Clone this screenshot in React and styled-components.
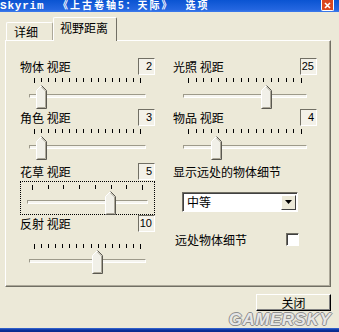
import React from "react";
import styled, { createGlobalStyle } from "styled-components";

const GlobalStyle = createGlobalStyle`
  html, body {
    margin: 0;
    padding: 0;
    background: #ece9d8;
  }
  body {
    font-family: "Noto Sans CJK SC", "Liberation Sans", sans-serif;
    font-size: 12px;
    color: #000;
  }
`;

const Window = styled.div`
  width: 339px;
  height: 332px;
  display: flex;
  flex-direction: column;
  background: #ece9d8;
  overflow: hidden;
`;

const TitleBar = styled.div`
  height: 12px;
  flex: none;
  display: flex;
  align-items: flex-start;
  justify-content: space-between;
  background: linear-gradient(#0a54d2, #2466e0 80%, #3d7cec);
  padding-right: 5px;
`;

const Title = styled.div`
  display: flex;
  align-items: center;
  height: 12px;
  color: #fff;
  font-weight: bold;
  white-space: pre;
`;

const Latin = styled.span`
  font-family: "Liberation Mono", monospace;
  font-size: 11px;
  line-height: 12px;
  letter-spacing: 0.8px;
  width: ${p => p.w}px;
`;

const Cjk = styled.span`
  display: block;
  font-family: "Liberation Sans", "Noto Sans CJK SC", sans-serif;
  font-size: 10px;
  line-height: 12px;
  height: 12px;
  letter-spacing: 2px;
  margin-right: ${p => p.mr || 0}px;
`;

const CloseBox = styled.div`
  width: 11px;
  height: 10px;
  background: #d9461e;
  border: 1px solid #fff;
  border-top: none;
  border-radius: 0 0 2px 2px;
  display: flex;
  align-items: center;
  justify-content: center;
`;

const Body = styled.div`
  flex: 1;
  display: flex;
  flex-direction: column;
  padding: 0 8px 0 5px;
`;

const TabStrip = styled.div`
  height: 28px;
  display: flex;
  align-items: flex-end;
  padding-left: 1px;
  position: relative;
  z-index: 1;
`;

const Tab = styled.div`
  height: ${p => (p.active ? 24 : 18)}px;
  margin-bottom: ${p => (p.active ? -1 : 0)}px;
  padding: ${p => (p.active ? "3px 8px 0 6px" : "2px 14px 0 7px")};
  box-sizing: border-box;
  background: #ece9d8;
  border-top: 1px solid #fff;
  border-left: 1px solid #fff;
  border-right: 1px solid ${p => (p.active ? "#716f64" : "#aca899")};
  border-radius: 2px 2px 0 0;
  line-height: 14px;
  font-size: 12px;
`;

const Panel = styled.div`
  height: 247px;
  box-sizing: border-box;
  border-top: 1px solid #fff;
  border-left: 1px solid #fff;
  border-right: 1px solid #716f64;
  border-bottom: 1px solid #716f64;
  box-shadow: inset -1px -1px 0 #aca899;
  padding: 17px 0 0 14px;
  display: grid;
  grid-template-columns: 135px 144px;
  column-gap: 18px;
  align-items: start;
`;

const Column = styled.div`
  display: flex;
  flex-direction: column;
`;

const Header = styled.div`
  height: 17px;
  display: flex;
  align-items: center;
  justify-content: space-between;
  margin-top: ${p => p.mt || 0}px;
`;

const Label = styled.span`
  font-size: 12px;
  line-height: 14px;
  white-space: pre;
`;

const ValueBox = styled.div`
  width: 17px;
  height: 17px;
  box-sizing: border-box;
  border-top: 1px solid #716f64;
  border-left: 1px solid #716f64;
  border-bottom: 1px solid #fff;
  border-right: 1px solid #fff;
  background: #f3f1e8;
  font-family: "Liberation Sans", sans-serif;
  font-size: 11px;
  line-height: 15px;
  text-align: right;
  padding-right: 2px;
`;

const SliderBox = styled.div`
  height: 34px;
  box-sizing: border-box;
  padding: ${p => p.top}px ${p => p.inset}px 0;
  margin-top: ${p => p.mt || 0}px;
  border: 1px dotted ${p => (p.focused ? "#000" : "transparent")};
`;

const TickRow = styled.div`
  height: 5px;
  margin: 0 5px;
  display: flex;
  justify-content: space-between;
`;

const Tick = styled.div`
  width: 1px;
  height: ${p => (p.edge ? 5 : 4)}px;
  background: #000;
`;

const Track = styled.div`
  position: relative;
  height: 4px;
  margin-top: ${p => p.gap}px;
  box-sizing: border-box;
  border-top: 1px solid #9d9a8a;
  border-left: 1px solid #9d9a8a;
  border-bottom: 1px solid #fff;
  border-right: 1px solid #fff;
  background: #f5f4ee;
`;

const Thumb = styled.svg`
  position: absolute;
  top: -10px;
  margin-left: -6px;
  display: block;
`;

const Plain = styled.div`
  font-size: 12px;
  line-height: 16px;
  margin-top: ${p => p.mt || 0}px;
`;

const Combo = styled.div`
  width: 116px;
  height: 20px;
  box-sizing: border-box;
  margin: 12px 0 0 9px;
  border-top: 1px solid #716f64;
  border-left: 1px solid #716f64;
  border-bottom: 1px solid #fff;
  border-right: 1px solid #fff;
  box-shadow: inset 1px 1px 0 #404040;
  background: #fff;
  display: flex;
  align-items: center;
  justify-content: space-between;
  padding: 1px 1px 1px 4px;
`;

const ComboText = styled.span`
  font-size: 12px;
  line-height: 14px;
`;

const ComboButton = styled.div`
  width: 15px;
  height: 15px;
  box-sizing: border-box;
  background: #ece9d8;
  border-top: 1px solid #fff;
  border-left: 1px solid #fff;
  border-right: 1px solid #404040;
  border-bottom: 1px solid #404040;
  display: flex;
  align-items: center;
  justify-content: center;
`;

const CheckRow = styled.div`
  display: flex;
  align-items: center;
  justify-content: space-between;
  margin-top: 20px;
  padding: 0 18px 0 2px;
  height: 15px;
`;

const CheckBox = styled.div`
  width: 13px;
  height: 13px;
  box-sizing: border-box;
  border-top: 1px solid #716f64;
  border-left: 1px solid #716f64;
  border-bottom: 1px solid #fff;
  border-right: 1px solid #fff;
  box-shadow: inset 1px 1px 0 #404040;
  background: #fff;
`;

const Footer = styled.div`
  display: flex;
  justify-content: flex-end;
  margin-top: 7px;
`;

const Button = styled.div`
  width: 75px;
  height: 17px;
  box-sizing: border-box;
  background: #ece9d8;
  border-top: 1px solid #fff;
  border-left: 1px solid #fff;
  border-right: 1px solid #000;
  border-bottom: 1px solid #000;
  box-shadow: inset -1px -1px 0 #808080;
  display: flex;
  align-items: center;
  justify-content: center;
  font-size: 12px;
  line-height: 14px;
`;

const Watermark = styled.div`
  display: flex;
  justify-content: flex-end;
  height: 17px;
  font-family: "Liberation Sans", sans-serif;
  font-weight: bold;
  font-style: italic;
  font-size: 17px;
  line-height: 17px;
  letter-spacing: 0.5px;
  color: #e6e6e6;
  text-shadow: 1px 0 0 #8e8e8e, -1px 0 0 #8e8e8e, 0 1px 0 #8e8e8e, 0 -1px 0 #8e8e8e;
`;

const BottomFrame = styled.div`
  height: 4px;
  flex: none;
  background: linear-gradient(#3b6fd8, #0a2f9c 50%, #0a2a8a);
`;

function ThumbIcon({ left }) {
  return (
    <Thumb width="11" height="24" viewBox="0 0 11 24" style={{ left }}>
      <polygon points="0.5,5.5 5.5,0.5 10.5,5.5 10.5,23.5 0.5,23.5" fill="#f1f0e8" />
      <polyline points="0.5,23 0.5,5.5 5.5,0.5" fill="none" stroke="#fff" />
      <polyline points="5.5,0.5 10.5,5.5 10.5,23.5 0.5,23.5" fill="none" stroke="#5a5850" />
      <polyline points="5.5,2 9.5,6 9.5,22.5 1.5,22.5" fill="none" stroke="#aca899" />
    </Thumb>
  );
}

function Slider({ ticks, pos, top = 2, gap = 11, inset = 8, mt, focused }) {
  const items = Array.from({ length: ticks }, (_, i) => i);
  return (
    <SliderBox top={top} inset={inset} mt={mt} focused={focused}>
      <TickRow>
        {items.map(i => (
          <Tick key={i} edge={i === 0 || i === ticks - 1} />
        ))}
      </TickRow>
      <Track gap={gap}>
        <ThumbIcon left={`calc(5px + (100% - 10px) * ${pos})`} />
      </Track>
    </SliderBox>
  );
}

function Row({ label, value, mt }) {
  return (
    <Header mt={mt}>
      <Label>{label}</Label>
      <ValueBox>{value}</ValueBox>
    </Header>
  );
}

export default function App() {
  return (
    <>
      <GlobalStyle />
      <Window>
        <TitleBar>
          <Title>
            <Latin w={58}>Skyrim</Latin>
            <Cjk mr={12}>《上古卷轴5：天际》</Cjk>
            <Cjk>选项</Cjk>
          </Title>
          <CloseBox>
            <svg width="7" height="7" viewBox="0 0 7 7">
              <path d="M1 1 L6 6 M6 1 L1 6" stroke="#fff" strokeWidth="1.6" />
            </svg>
          </CloseBox>
        </TitleBar>
        <Body>
          <TabStrip>
            <Tab>详细</Tab>
            <Tab active>视野距离</Tab>
          </TabStrip>
          <Panel>
            <Column>
              <Row label="物体 视距" value="2" />
              <Slider ticks={16} pos={1 / 15} />
              <Row label="角色 视距" value="3" />
              <Slider ticks={16} pos={1 / 15} />
              <Row label="花草 视距" value="5" mt={3} />
              <Slider ticks={8} pos={5 / 7} top={3} gap={10} inset={6} mt={1} focused />
              <Row label="反射 视距" value="10" />
              <Slider ticks={16} pos={9 / 15} top={11} gap={10} />
            </Column>
            <Column>
              <Row label="光照 视距" value="25" />
              <Slider ticks={16} pos={0.7} inset={9} />
              <Row label="物品 视距" value="4" />
              <Slider ticks={16} pos={0.25} inset={9} />
              <Plain mt={4}>显示远处的物体细节</Plain>
              <Combo>
                <ComboText>中等</ComboText>
                <ComboButton>
                  <svg width="7" height="4" viewBox="0 0 7 4">
                    <path d="M0 0 H7 L3.5 4 Z" fill="#000" />
                  </svg>
                </ComboButton>
              </Combo>
              <CheckRow>
                <Label>远处物体细节</Label>
                <CheckBox />
              </CheckRow>
            </Column>
          </Panel>
          <Footer>
            <Button>关闭</Button>
          </Footer>
          <Watermark>GAMERSKY</Watermark>
        </Body>
        <BottomFrame />
      </Window>
    </>
  );
}
